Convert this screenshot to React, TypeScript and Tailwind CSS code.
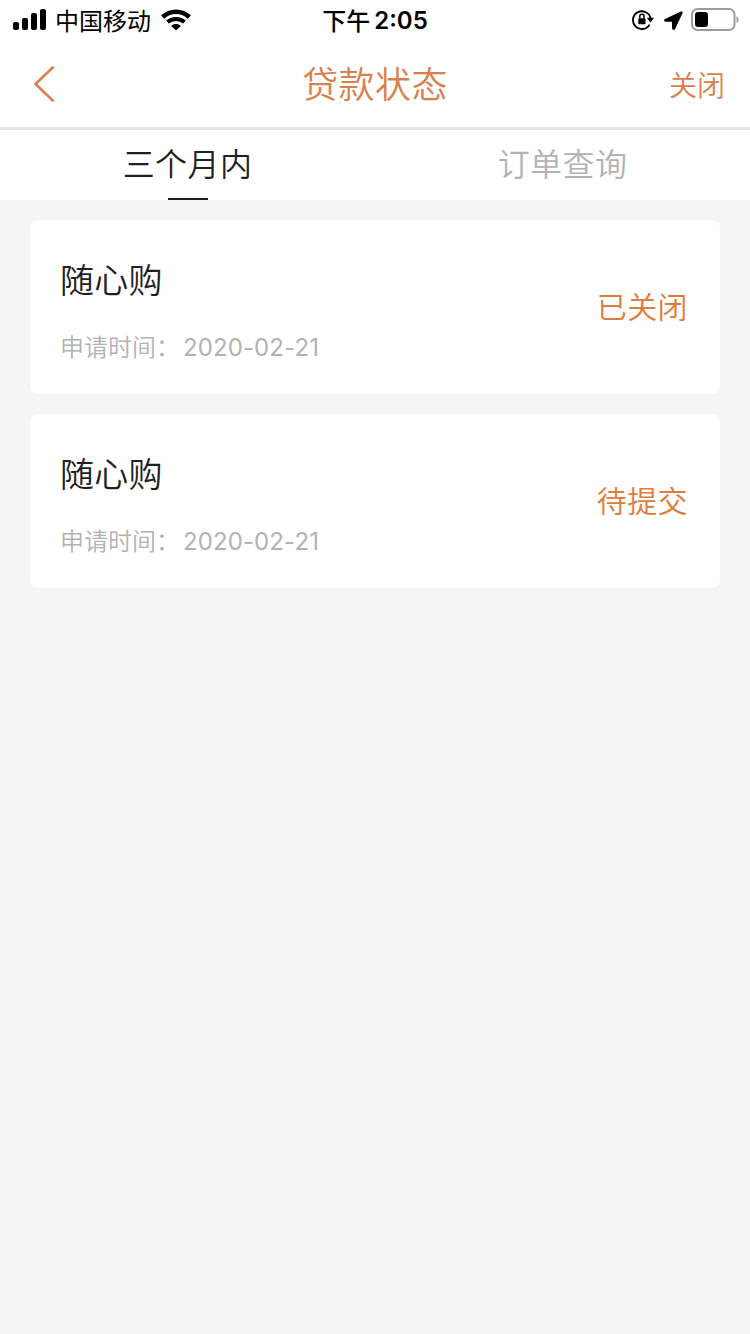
import clsx from 'clsx'

type Loan = {
  id: number
  name: string
  date: string
  status: string
}

const LOANS: Loan[] = [
  { id: 1, name: '随心购', date: '2020-02-21', status: '已关闭' },
  { id: 2, name: '随心购', date: '2020-02-21', status: '待提交' },
]

const TABS = ['三个月内', '订单查询']

function SignalIcon() {
  return (
    <svg width="34" height="22" viewBox="0 0 34 22" className="shrink-0">
      <rect x="0" y="13" width="6" height="8" rx="2" />
      <rect x="9" y="9" width="6" height="12" rx="2" />
      <rect x="18" y="4" width="6" height="17" rx="2" />
      <rect x="27" y="0" width="6" height="21" rx="2" />
    </svg>
  )
}

function WifiIcon() {
  return (
    <svg width="30" height="22" viewBox="0 0 30 22" className="shrink-0">
      <path d="M1.6 8.1C9 0.9 21 0.9 28.4 8.1" fill="none" stroke="#000" strokeWidth="4.4" />
      <path d="M6.5 13.1C11.2 8.8 18.8 8.8 23.5 13.1" fill="none" stroke="#000" strokeWidth="4" />
      <path d="M10.2 16.9C12.9 14.5 17.1 14.5 19.8 16.9L15 21.6Z" />
    </svg>
  )
}

function RotationLockIcon() {
  return (
    <svg width="22" height="22" viewBox="0 0 22 22" className="shrink-0">
      <path d="M17.6 15.6A8.9 8.9 0 1 1 18.5 9" fill="none" stroke="#000" strokeWidth="1.9" />
      <path d="M14.8 8.8H22L18.4 13.4Z" />
      <rect x="6.3" y="9.2" width="7.2" height="6" rx="0.8" />
      <path d="M7.8 9.6V7.4a2.1 2.1 0 0 1 4.2 0V9.6" fill="none" stroke="#000" strokeWidth="1.5" />
    </svg>
  )
}

function LocationIcon() {
  return (
    <svg width="19" height="19" viewBox="0 0 19 19" className="shrink-0">
      <path
        d="M17.2 1.2L1.2 8.6C0.5 9 0.7 10 1.5 10H8.5L8.8 17.4C8.9 18.3 10.1 18.5 10.5 17.7L17.9 2C18.2 1.3 17.8 0.9 17.2 1.2Z"
        stroke="#000"
        strokeWidth="1.3"
      />
    </svg>
  )
}

function BatteryIcon() {
  return (
    <svg width="48" height="24" viewBox="0 0 48 24" className="shrink-0">
      <rect x="1" y="1" width="42.5" height="21" rx="5.5" fill="none" stroke="#9b9b9b" strokeWidth="2" />
      <rect x="4" y="4" width="13" height="15" rx="3.2" />
      <path d="M45.5 8.3C48.2 9.4 48.2 13.6 45.5 14.7Z" fill="#9b9b9b" />
    </svg>
  )
}

function StatusBar() {
  return (
    <div className="grid h-10 grid-cols-3 items-center text-2xl leading-9 text-black">
      <div className="flex items-center pl-[13px]">
        <SignalIcon />
        <span className="ml-2 whitespace-nowrap">中国移动</span>
        <span className="ml-2.5"><WifiIcon /></span>
      </div>
      <div className="flex items-center justify-center gap-1 font-medium">
        <span>下午</span>
        <span className="pt-0.5 font-[Inter] font-semibold">2:05</span>
      </div>
      <div className="flex items-center justify-end pr-[11px]">
        <RotationLockIcon />
        <span className="ml-2.5"><LocationIcon /></span>
        <span className="ml-2"><BatteryIcon /></span>
      </div>
    </div>
  )
}

function NavBar() {
  return (
    <header className="grid h-[90px] grid-cols-[1fr_auto_1fr] items-center border-b-3 border-[#e6e6e6] text-[#d9804d]">
      <button className="pl-8">
        <svg width="24" height="38" viewBox="0 0 24 38">
          <path d="M21.5 1.8L3.5 19L21.5 36.2" fill="none" stroke="currentColor" strokeWidth="2.6" />
        </svg>
      </button>
      <h1 className="pb-1 text-4xl leading-[80px] font-[350] tracking-[0.4px]">贷款状态</h1>
      <button className="pr-[25px] text-right text-[28px] leading-[84px] font-[350]">关闭</button>
    </header>
  )
}

function LoanCard({ loan }: { loan: Loan }) {
  return (
    <li className="flex h-[174px] items-center justify-between rounded-lg bg-white pr-8 pl-[30px] font-[350]">
      <div className="pt-1.5">
        <h2 className="text-[34px] leading-[48px] tracking-[0.3px] text-[#1f1f1f]">{loan.name}</h2>
        <p className="mt-[25px] flex text-2xl leading-9 text-[#b2b2b2]">
          <span>申请时间：</span>
          <span className="ml-[3px] pt-0.5 font-[Inter] font-[380] tracking-[0.1px]">{loan.date}</span>
        </p>
      </div>
      <span className="pb-1 text-[30px] leading-[42px] tracking-[0.4px] text-[#df7c3c]">{loan.status}</span>
    </li>
  )
}

export default function App() {
  return (
    <div className="min-h-screen bg-[#f5f5f5] font-['Noto_Sans_CJK_SC',sans-serif]">
      <div className="bg-white">
        <StatusBar />
        <NavBar />
        <nav className="grid h-[70px] grid-cols-2">
          {TABS.map((tab, i) => (
            <button
              key={tab}
              className={clsx(
                'flex flex-col items-center justify-between text-[32px] leading-[65px] font-[350] tracking-[0.4px]',
                i === 0 ? 'text-[#1f1f1f]' : 'text-[#b2b2b2]',
              )}
            >
              {tab}
              {i === 0 && <span className="h-0.5 w-10 bg-[#1f1f1f]" />}
            </button>
          ))}
        </nav>
      </div>
      <ul className="flex flex-col gap-5 px-[30px] py-5">
        {LOANS.map((loan) => (
          <LoanCard key={loan.id} loan={loan} />
        ))}
      </ul>
    </div>
  )
}
